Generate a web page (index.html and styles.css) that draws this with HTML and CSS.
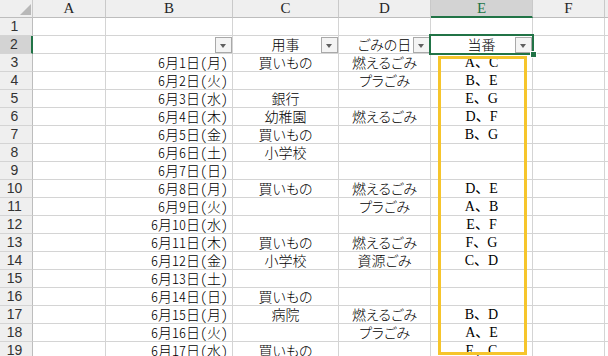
FILE: index.html
```html
<!DOCTYPE html>
<html lang="ja">
<head>
<meta charset="utf-8">
<link rel="stylesheet" href="styles.css">
</head>
<body>
<div class="sheet">
  <div class="row hdr">
    <div class="c corner"><span class="tri"></span></div>
    <div class="c">A</div><div class="c">B</div><div class="c">C</div><div class="c">D</div><div class="c sel">E</div><div class="c">F</div><div class="c"></div>
  </div>
  <div class="row"><div class="c rh">1</div><div class="c"></div><div class="c"></div><div class="c"></div><div class="c"></div><div class="c"></div><div class="c"></div><div class="c"></div></div>
  <div class="row"><div class="c rh sel">2</div><div class="c"></div><div class="c flt"><span class="fb"></span></div><div class="c mid flt">用事<span class="fb"></span></div><div class="c mid flt">ごみの日<span class="fb"></span></div><div class="c mid flt">当番<span class="fb"></span></div><div class="c"></div><div class="c"></div></div>
  <div class="row"><div class="c rh">3</div><div class="c"></div><div class="c date">6月1日(月)</div><div class="c mid">買いもの</div><div class="c mid">燃えるごみ</div><div class="c mid duty">A、C</div><div class="c"></div><div class="c"></div></div>
  <div class="row"><div class="c rh">4</div><div class="c"></div><div class="c date">6月2日(火)</div><div class="c mid"></div><div class="c mid">プラごみ</div><div class="c mid duty">B、E</div><div class="c"></div><div class="c"></div></div>
  <div class="row"><div class="c rh">5</div><div class="c"></div><div class="c date">6月3日(水)</div><div class="c mid">銀行</div><div class="c mid"></div><div class="c mid duty">E、G</div><div class="c"></div><div class="c"></div></div>
  <div class="row"><div class="c rh">6</div><div class="c"></div><div class="c date">6月4日(木)</div><div class="c mid">幼稚園</div><div class="c mid">燃えるごみ</div><div class="c mid duty">D、F</div><div class="c"></div><div class="c"></div></div>
  <div class="row"><div class="c rh">7</div><div class="c"></div><div class="c date">6月5日(金)</div><div class="c mid">買いもの</div><div class="c mid"></div><div class="c mid duty">B、G</div><div class="c"></div><div class="c"></div></div>
  <div class="row"><div class="c rh">8</div><div class="c"></div><div class="c date">6月6日(土)</div><div class="c mid">小学校</div><div class="c mid"></div><div class="c mid duty"></div><div class="c"></div><div class="c"></div></div>
  <div class="row"><div class="c rh">9</div><div class="c"></div><div class="c date">6月7日(日)</div><div class="c mid"></div><div class="c mid"></div><div class="c mid duty"></div><div class="c"></div><div class="c"></div></div>
  <div class="row"><div class="c rh">10</div><div class="c"></div><div class="c date">6月8日(月)</div><div class="c mid">買いもの</div><div class="c mid">燃えるごみ</div><div class="c mid duty">D、E</div><div class="c"></div><div class="c"></div></div>
  <div class="row"><div class="c rh">11</div><div class="c"></div><div class="c date">6月9日(火)</div><div class="c mid"></div><div class="c mid">プラごみ</div><div class="c mid duty">A、B</div><div class="c"></div><div class="c"></div></div>
  <div class="row"><div class="c rh">12</div><div class="c"></div><div class="c date">6月10日(水)</div><div class="c mid"></div><div class="c mid"></div><div class="c mid duty">E、F</div><div class="c"></div><div class="c"></div></div>
  <div class="row"><div class="c rh">13</div><div class="c"></div><div class="c date">6月11日(木)</div><div class="c mid">買いもの</div><div class="c mid">燃えるごみ</div><div class="c mid duty">F、G</div><div class="c"></div><div class="c"></div></div>
  <div class="row"><div class="c rh">14</div><div class="c"></div><div class="c date">6月12日(金)</div><div class="c mid">小学校</div><div class="c mid">資源ごみ</div><div class="c mid duty">C、D</div><div class="c"></div><div class="c"></div></div>
  <div class="row"><div class="c rh">15</div><div class="c"></div><div class="c date">6月13日(土)</div><div class="c mid"></div><div class="c mid"></div><div class="c mid duty"></div><div class="c"></div><div class="c"></div></div>
  <div class="row"><div class="c rh">16</div><div class="c"></div><div class="c date">6月14日(日)</div><div class="c mid">買いもの</div><div class="c mid"></div><div class="c mid duty"></div><div class="c"></div><div class="c"></div></div>
  <div class="row"><div class="c rh">17</div><div class="c"></div><div class="c date">6月15日(月)</div><div class="c mid">病院</div><div class="c mid">燃えるごみ</div><div class="c mid duty">B、D</div><div class="c"></div><div class="c"></div></div>
  <div class="row"><div class="c rh">18</div><div class="c"></div><div class="c date">6月16日(火)</div><div class="c mid"></div><div class="c mid">プラごみ</div><div class="c mid duty">A、E</div><div class="c"></div><div class="c"></div></div>
  <div class="row"><div class="c rh">19</div><div class="c"></div><div class="c date">6月17日(水)</div><div class="c mid">買いもの</div><div class="c mid"></div><div class="c mid duty">E、C</div><div class="c"></div><div class="c"></div></div>

  <div class="selbox"><span class="handle"></span></div>
  <div class="yellow"></div>
</div>
</body>
</html>
```

FILE: styles.css
```css
html, body {
  margin: 0;
  padding: 0;
  background: #ffffff;
}

body {
  font-family: "Noto Sans CJK JP", sans-serif;
}

.sheet {
  position: relative;
  width: 608px;
  height: 356px;
  overflow: hidden;
}

.row {
  display: grid;
  grid-template-columns: 33px 73px 127px 106px 92px 102px 72px 1fr;
  height: 18px;
}

.c {
  box-sizing: border-box;
  height: 18px;
  border-right: 1px solid #d4d4d4;
  border-bottom: 1px solid #d4d4d4;
  padding: 0 3px;
  font-size: 14px;
  line-height: 17px;
  font-weight: 300;
  color: #000;
  white-space: nowrap;
}

.hdr .c {
  background: #efefef;
  border-right-color: #c9c9c9;
  border-bottom-color: #bdbdbd;
  font-family: "Liberation Serif", serif;
  font-weight: 400;
  font-size: 15px;
  line-height: 17px;
  text-align: center;
  color: #262626;
}

.hdr .c.sel {
  background: #d3d3d3;
  border-bottom: 2px solid #217346;
  color: #217346;
}

.corner {
  position: relative;
}

.tri {
  position: absolute;
  right: 1px;
  bottom: 2px;
  width: 11px;
  height: 11px;
  background: #b8b8b8;
  clip-path: polygon(100% 0, 100% 100%, 0 100%);
}

.rh {
  background: #efefef;
  border-right-color: #bdbdbd;
  border-bottom-color: #d4d4d4;
  font-family: "Liberation Sans", sans-serif;
  font-weight: 400;
  font-size: 14px;
  text-align: center;
  padding: 0 3px 0 0;
  color: #333;
}

.rh.sel {
  background: #d3d3d3;
  border-right: 2px solid #217346;
}

.date {
  text-align: right;
  padding-right: 4px;
  font-feature-settings: "hwid";
}

.mid {
  text-align: center;
  font-feature-settings: "palt";
}

.duty {
  font-family: "Liberation Serif", "Noto Sans CJK JP", serif;
  font-weight: 400;
  font-feature-settings: normal;
}

.flt {
  position: relative;
}

.fb {
  position: absolute;
  right: 0;
  bottom: 0;
  width: 17px;
  height: 16px;
  box-sizing: border-box;
  border: 1px solid #a9a9a9;
  background: #f4f4f4;
}

.fb::after {
  content: "";
  position: absolute;
  left: 4px;
  top: 6px;
  border-left: 3.5px solid transparent;
  border-right: 3.5px solid transparent;
  border-top: 4px solid #5f5f5f;
}

.selbox {
  position: absolute;
  left: 429px;
  top: 34px;
  width: 105px;
  height: 21px;
  box-sizing: border-box;
  border: 2px solid #217346;
}

.handle {
  position: absolute;
  right: -5px;
  bottom: -5px;
  width: 5px;
  height: 5px;
  background: #217346;
  border: 1px solid #ffffff;
}

.yellow {
  position: absolute;
  left: 438px;
  top: 56px;
  width: 89px;
  height: 299px;
  box-sizing: border-box;
  border: 3px solid #f6c52c;
}
```
